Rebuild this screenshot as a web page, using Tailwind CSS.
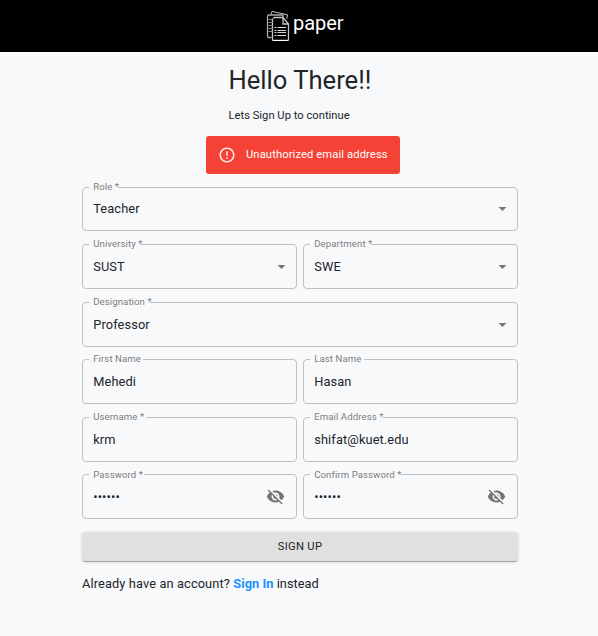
<!DOCTYPE html>
<html lang="en">
<head>
<meta charset="utf-8">
<title>paper</title>
<script src="https://cdn.jsdelivr.net/npm/@tailwindcss/browser@4"></script>
</head>
<body class="min-h-screen bg-[#f8f9fb] font-[Roboto,sans-serif] text-[12.8px] leading-[15px] tracking-[0.12px] text-[#212529]">
<svg class="hidden">
  <symbol id="eye-off" viewBox="0 0 24 24"><path d="M12 7c2.76 0 5 2.24 5 5 0 .65-.13 1.26-.36 1.83l2.92 2.92c1.51-1.26 2.7-2.89 3.43-4.75-1.73-4.39-6-7.5-11-7.5-1.4 0-2.74.25-3.98.7l2.16 2.16C10.74 7.13 11.35 7 12 7zM2 4.27l2.28 2.28.46.46C3.08 8.3 1.78 10.02 1 12c1.73 4.39 6 7.5 11 7.5 1.55 0 3.03-.3 4.38-.84l.42.42L19.73 22 21 20.73 3.27 3 2 4.27zM7.53 9.8l1.55 1.55c-.05.21-.08.43-.08.65 0 1.66 1.34 3 3 3 .22 0 .44-.03.65-.08l1.55 1.55c-.67.33-1.41.53-2.2.53-2.76 0-5-2.24-5-5 0-.79.2-1.53.53-2.2zm4.31-.78l3.15 3.15.02-.16c0-1.66-1.34-3-3-3l-.17.01z"/></symbol>
  <symbol id="caret" viewBox="0 0 24 24"><path d="M7 10l5 5 5-5z"/></symbol>
</svg>
<header class="flex h-[52px] justify-center bg-black">
  <div class="flex pl-[11px]">
    <svg class="mt-[10px] h-[31px] w-[24px]" viewBox="0 0 24 31" fill="none" stroke="#c4c4c4" stroke-width="1">
      <path d="M5 4.500 6 1.400l15.500 3.400-.7 4"/>
      <path d="M5.500 27.500H2.800c-.8 0-1.300-.5-1.300-1.300V6.300c0-.8.5-1.300 1.300-1.300H17v2" stroke="#aaa" stroke-width="1.300"/>
      <path d="M7.500 8.500c0-.6.4-1 1-1H17l5.500 6.500v15.500c0 .6-.4 1-1 1h-14c-.6 0-1-.4-1-1V8.500M17 7.500V14h5.500" stroke-width="1.300"/>
      <path d="M2.500 9.500h4M2.500 12.500h4M2.500 15.500h4M2.500 18.500h4M2.500 21.500h4" stroke="#888"/>
      <path d="M8.500 17.500h2M11.500 17.500h8.500M8.500 20.500h2M11.500 20.500h8.500M8.500 22.500h2M11.500 22.500h8.500M8.500 25.500h2M11.500 25.500h8.500" stroke="#d8d8d8"/>
      <path d="M7.500 30.500h14" stroke="#fff"/>
    </svg>
    <span class="ml-[3.500px] mt-[11px] text-[20px] leading-[24px] tracking-[-0.050px] text-white">paper</span>
  </div>
</header>
<main class="ml-[82px] w-[436px]">
  <h1 class="ml-[146.500px] pt-[13px] text-[25.600px] leading-[30px] tracking-normal">Hello There!!</h1>
  <p class="ml-[146.500px] mt-[13px] text-[11.200px] leading-[15px] tracking-[0.01px]">Lets Sign Up to continue</p>
  <div class="ml-[124px] mt-[13px] flex h-[38px] w-[194px] items-center rounded-[3px] bg-[#f44336] pl-[12px] text-[11.200px] tracking-[0.11px] text-white">
    <svg class="mr-[10px] h-[18px] w-[18px]" viewBox="0 0 24 24" fill="#fff" fill-opacity=".9"><path d="M11 15h2v2h-2zm0-8h2v6h-2zm.99-5C6.470 2 2 6.480 2 12s4.470 10 9.990 10C17.520 22 22 17.520 22 12S17.520 2 11.990 2zM12 20c-4.420 0-8-3.580-8-8s3.580-8 8-8 8 3.580 8 8-3.580 8-8 8z"/></svg>
    <span class="-mt-px">Unauthorized email address</span>
  </div>
  <form class="mt-[13px]">
    <div class="relative flex h-[44px] items-center justify-between rounded-[4px] border border-[#bfc0c1] pb-[1px] pl-[10.200px] pr-[5px]">
      <span class="absolute -top-[7px] left-[6px] h-[12px] w-[29px] whitespace-nowrap bg-[#f8f9fb] pl-[4.200px] text-[9.600px] leading-[11px] tracking-[0.09px] text-[#7c7d7e]">Role *</span>
      <span>Teacher</span><svg class="h-[19px] w-[19px] fill-[#757575]"><use href="#caret"/></svg>
    </div>
    <div class="mt-[13px] flex gap-[6px]">
      <div class="relative flex h-[45px] w-[215px] items-center justify-between rounded-[4px] border border-[#bfc0c1] pl-[10.200px] pr-[5px]">
        <span class="absolute -top-[7px] left-[6px] h-[12px] w-[51px] whitespace-nowrap bg-[#f8f9fb] pl-[4.200px] text-[9.600px] leading-[11px] tracking-[0.09px] text-[#7c7d7e]">University *</span>
        <span>SUST</span><svg class="h-[19px] w-[19px] fill-[#757575]"><use href="#caret"/></svg>
      </div>
      <div class="relative flex h-[45px] w-[215px] items-center justify-between rounded-[4px] border border-[#bfc0c1] pl-[10.200px] pr-[5px]">
        <span class="absolute -top-[7px] left-[6px] h-[12px] w-[61px] whitespace-nowrap bg-[#f8f9fb] pl-[4.200px] text-[9.600px] leading-[11px] tracking-[0.09px] text-[#7c7d7e]">Department *</span>
        <span>SWE</span><svg class="h-[19px] w-[19px] fill-[#757575]"><use href="#caret"/></svg>
      </div>
    </div>
    <div class="relative mt-[13px] flex h-[45px] items-center justify-between rounded-[4px] border border-[#bfc0c1] pl-[10.200px] pr-[5px]">
      <span class="absolute -top-[7px] left-[6px] h-[12px] w-[61px] whitespace-nowrap bg-[#f8f9fb] pl-[4.200px] text-[9.600px] leading-[11px] tracking-[0.09px] text-[#7c7d7e]">Designation *</span>
      <span>Professor</span><svg class="h-[19px] w-[19px] fill-[#757575]"><use href="#caret"/></svg>
    </div>
    <div class="mt-[12px] flex gap-[6px]">
      <div class="relative flex h-[45px] w-[215px] items-center rounded-[4px] border border-[#bfc0c1] pl-[10.200px]">
        <span class="absolute -top-[7px] left-[6px] h-[12px] w-[54px] whitespace-nowrap bg-[#f8f9fb] pl-[4.200px] text-[9.600px] leading-[11px] tracking-[0.09px] text-[#7c7d7e]">First Name</span>
        <span>Mehedi</span>
      </div>
      <div class="relative flex h-[45px] w-[215px] items-center rounded-[4px] border border-[#bfc0c1] pl-[10.200px]">
        <span class="absolute -top-[7px] left-[6px] h-[12px] w-[54px] whitespace-nowrap bg-[#f8f9fb] pl-[4.200px] text-[9.600px] leading-[11px] tracking-[0.09px] text-[#7c7d7e]">Last Name</span>
        <span>Hasan</span>
      </div>
    </div>
    <div class="mt-[13px] flex gap-[6px]">
      <div class="relative flex h-[45px] w-[215px] items-center rounded-[4px] border border-[#bfc0c1] pl-[10.200px]">
        <span class="absolute -top-[7px] left-[6px] h-[12px] w-[57px] whitespace-nowrap bg-[#f8f9fb] pl-[4.200px] text-[9.600px] leading-[11px] tracking-[0.09px] text-[#7c7d7e]">Username *</span>
        <span>krm</span>
      </div>
      <div class="relative flex h-[45px] w-[215px] items-center rounded-[4px] border border-[#bfc0c1] pl-[10.200px]">
        <span class="absolute -top-[7px] left-[6px] h-[12px] w-[73px] whitespace-nowrap bg-[#f8f9fb] pl-[4.200px] text-[9.600px] leading-[11px] tracking-[0.09px] text-[#7c7d7e]">Email Address *</span>
        <span>shifat@kuet.edu</span>
      </div>
    </div>
    <div class="mt-[12px] flex gap-[6px]">
      <div class="relative flex h-[45px] w-[215px] items-center justify-between rounded-[4px] border border-[#bfc0c1] pl-[10.200px] pr-[11px]">
        <span class="absolute -top-[7px] left-[6px] h-[12px] w-[55px] whitespace-nowrap bg-[#f8f9fb] pl-[4.200px] text-[9.600px] leading-[13px] tracking-[0.09px] text-[#7c7d7e]">Password *</span>
        <input type="password" value="123456" class="w-[150px] outline-none"><svg class="h-[19px] w-[19px] fill-[#757575]"><use href="#eye-off"/></svg>
      </div>
      <div class="relative flex h-[45px] w-[215px] items-center justify-between rounded-[4px] border border-[#bfc0c1] pl-[10.200px] pr-[11px]">
        <span class="absolute -top-[7px] left-[6px] h-[12px] w-[91px] whitespace-nowrap bg-[#f8f9fb] pl-[4.200px] text-[9.600px] leading-[13px] tracking-[0.09px] text-[#7c7d7e]">Confirm Password *</span>
        <input type="password" value="123456" class="w-[150px] outline-none"><svg class="h-[19px] w-[19px] fill-[#757575]"><use href="#eye-off"/></svg>
      </div>
    </div>
    <button type="button" class="mt-[13px] h-[29px] w-full rounded-[3px] bg-[#e0e0e0] text-[11.200px] tracking-[0.32px] shadow-[0_2px_1px_-1px_rgba(0,0,0,0.2),0_1px_1px_0_rgba(0,0,0,0.14),0_1px_4px_0_rgba(0,0,0,0.12)]">SIGN UP</button>
  </form>
  <p class="mt-[15px]">Already have an account? <a class="font-bold tracking-[0.050px] text-[#1e90ff]">Sign In</a><span class="tracking-[0.020px]"> instead</span></p>
</main>
</body>
</html>
